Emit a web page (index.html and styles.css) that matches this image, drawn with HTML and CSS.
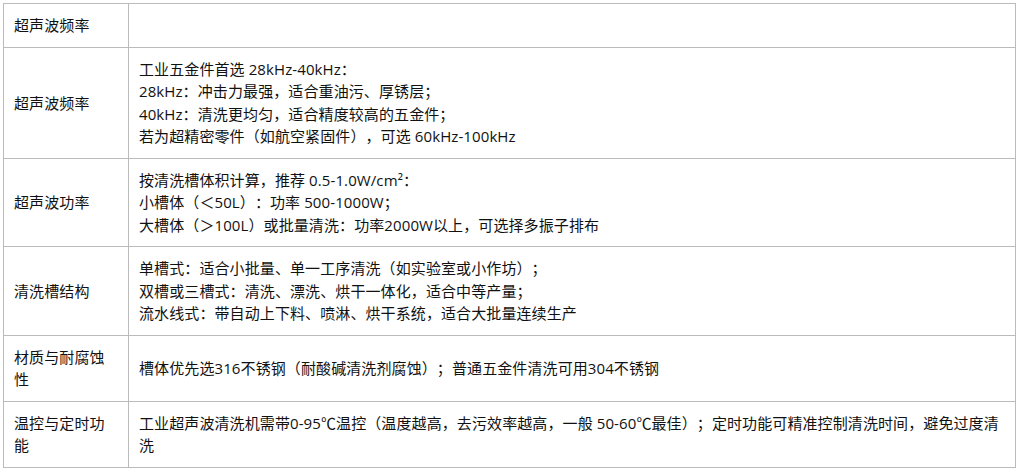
FILE: index.html
```html
<!DOCTYPE html>
<html lang="zh-CN">
<head>
<meta charset="utf-8">
<title>工业超声波清洗机选型</title>
<link rel="stylesheet" href="styles.css">
</head>
<body>
<table class="spec">
  <colgroup>
    <col class="col-key">
    <col class="col-val">
  </colgroup>
  <tbody>
    <tr class="r1">
      <td class="key">超声波频率</td>
      <td class="val"></td>
    </tr>
    <tr>
      <td class="key">超声波频率</td>
      <td class="val">工业五金件首选 28kHz-40kHz：<br>28kHz：冲击力最强，适合重油污、厚锈层；<br>40kHz：清洗更均匀，适合精度较高的五金件；<br>若为超精密零件（如航空紧固件），可选 60kHz-100kHz</td>
    </tr>
    <tr>
      <td class="key">超声波功率</td>
      <td class="val">按清洗槽体积计算，推荐 0.5-1.0W/cm²：<br>小槽体（＜50L）：功率 500-1000W；<br>大槽体（＞100L）或批量清洗：功率2000W以上，可选择多振子排布</td>
    </tr>
    <tr>
      <td class="key">清洗槽结构</td>
      <td class="val">单槽式：适合小批量、单一工序清洗（如实验室或小作坊）；<br>双槽或三槽式：清洗、漂洗、烘干一体化，适合中等产量；<br>流水线式：带自动上下料、喷淋、烘干系统，适合大批量连续生产</td>
    </tr>
    <tr>
      <td class="key">材质与耐腐蚀性</td>
      <td class="val">槽体优先选316不锈钢（耐酸碱清洗剂腐蚀）；普通五金件清洗可用304不锈钢</td>
    </tr>
    <tr>
      <td class="key">温控与定时功能</td>
      <td class="val">工业超声波清洗机需带0-95℃温控（温度越高，去污效率越高，一般 50-60℃最佳）；定时功能可精准控制清洗时间，避免过度清洗</td>
    </tr>
  </tbody>
</table>
</body>
</html>
```
FILE: styles.css
```css
html, body {
  background: #ffffff;
}
body {
  margin: 3px;
  font-family: "Open Sans", "Noto Sans CJK SC", sans-serif;
  font-size: 15px;
  color: #111111;
  text-spacing-trim: space-all;
}
.spec {
  width: 1013px;
  border-collapse: collapse;
  table-layout: fixed;
}
.col-key {
  width: 125px;
}
.spec td {
  border: 1px solid #bbbbbb;
  padding: 10.3px 10px;
  line-height: 22.3px;
  vertical-align: middle;
  text-align: left;
  word-break: break-all;
  letter-spacing: 0.1px;
  text-spacing-trim: space-all;
}
```
